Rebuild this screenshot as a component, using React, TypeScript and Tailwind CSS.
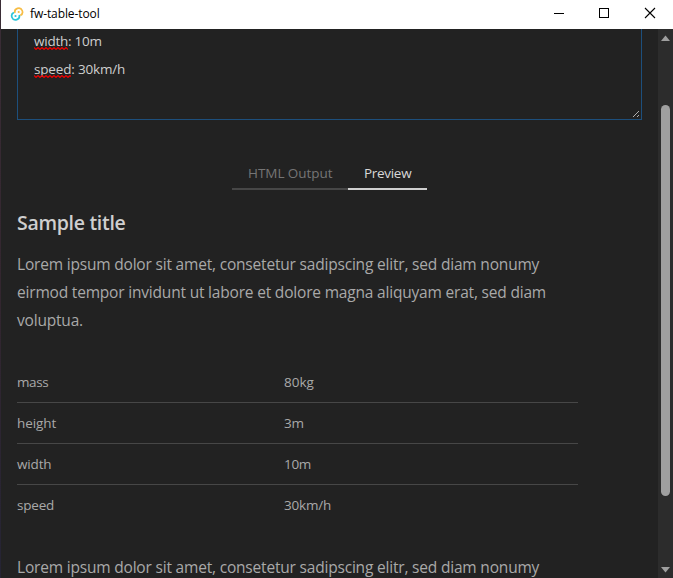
const rows = [
  { name: "mass", value: "80kg", a: "tracking-[-0.4px]", b: "tracking-[0px]" },
  { name: "height", value: "3m", a: "tracking-[-0.1px]", b: "tracking-[-0.3px]" },
  { name: "width", value: "10m", a: "tracking-[-0.15px]", b: "tracking-[-0.3px]" },
  { name: "speed", value: "30km/h", a: "tracking-[-0.2px]", b: "tracking-[-0.2px]" },
];

const intro = [
  "Lorem ipsum dolor sit amet, consetetur sadipscing elitr, sed diam nonumy",
  "eirmod tempor invidunt ut labore et dolore magna aliquyam erat, sed diam",
  "voluptua.",
];

function Misspelled({ word }: { word: string }) {
  return (
    <span className="relative inline-block">
      {word}
      <svg className="absolute top-[20px] left-0 h-[3px] w-full" fill="none">
        <path
          d="M0 .5L2 2.500L4 .5L6 2.500L8 .5L10 2.500L12 .5L14 2.500L16 .5L18 2.500L20 .5L22 2.500L24 .5L26 2.500L28 .5L30 2.500L32 .5L34 2.500L36 .5L38 2.500L40 .5"
          stroke="#f00000"
          strokeWidth="1.1"
        />
      </svg>
    </span>
  );
}

function TitleBar() {
  return (
    <header className="flex h-[29px] shrink-0 items-center bg-white pl-[9px] text-black">
      <svg width="14" height="14" viewBox="0 0 14 14" fill="none" className="mb-[2px] shrink-0">
        <path d="M5 6A3.800 3.800 0 1 1 10.300 8.400" stroke="#f7bd45" strokeWidth="1.7" />
        <path d="M9.200 8A3.800 3.800 0 1 1 3.900 5.600" stroke="#2cc5d8" strokeWidth="1.7" />
        <circle cx="8.700" cy="5" r="1.1" fill="#f7bd45" />
        <circle cx="5.500" cy="9" r="1.1" fill="#2cc5d8" />
      </svg>
      <span className="mb-[1px] ml-[6px] flex-1 text-[12px] leading-4 tracking-[-0.1px]">fw-table-tool</span>
      <svg width="120" height="29" viewBox="0 0 120 29" fill="none" stroke="#000" className="shrink-0" shapeRendering="crispEdges">
        <path d="M1 13.5H11M46.5 8.5h9v9h-9z" />
        <path d="M92 8l10 10M102 8L92 18" shapeRendering="auto" strokeWidth="1.1" />
      </svg>
    </header>
  );
}

function Scrollbar() {
  return (
    <div className="flex w-[15px] shrink-0 flex-col items-center bg-[#2c2c2c]">
      <svg width="15" height="76" viewBox="0 0 15 76" className="shrink-0">
        <path d="M3 12h9L7.500 6.500z" fill="#9f9f9f" />
      </svg>
      <div className="h-[391px] w-[9px] shrink-0 rounded-full bg-[#9f9f9f]" />
      <svg width="15" height="82" viewBox="0 0 15 82" className="shrink-0">
        <path d="M3 71h9l-4.500 5.500z" fill="#9f9f9f" />
      </svg>
    </div>
  );
}

function Paragraph({ lines }: { lines: string[] }) {
  return (
    <p className="text-[15.5px] leading-[28px] tracking-[-0.19px] whitespace-nowrap text-[#a9a9a9]">
      {lines.map((line) => (
        <span key={line} className="block">{line}</span>
      ))}
    </p>
  );
}

export default function App() {
  return (
    <div className="flex h-[578px] w-[673px] overflow-hidden bg-linear-to-b from-[#3a2d36] via-[#33262f] to-[#252434] font-['Open_Sans','Noto_Sans',sans-serif]">
      <div className="ml-px flex min-w-0 flex-1 flex-col bg-[#222222]">
        <TitleBar />
        <div className="flex min-h-0 flex-1">
          <main className="min-w-0 flex-1 overflow-hidden pl-4">
            <div className="relative flex h-[91px] w-[625px] flex-col border border-t-0 border-[#1d4f7c] pl-4 text-[13.5px] leading-[28px] text-[#cfcfcf]">
              <div className="-mt-[2px] h-[28px] tracking-[-0.24px]"><Misspelled word="width" />: 10m</div>
              <div className="h-[28px] tracking-[-0.18px]"><Misspelled word="speed" />: 30km/h</div>
              <svg width="8" height="8" viewBox="0 0 8 8" className="absolute right-px bottom-px" stroke="#c0c0c0" strokeWidth="0.9">
                <path d="M1 7L7 1M5 7l2-2" />
              </svg>
            </div>
            <div className="mt-[38px] ml-[215px] flex h-[32px] text-[13.5px] leading-[30px] whitespace-nowrap">
              <div className="w-[116px] border-b-2 border-[#474747] pl-4 tracking-[-0.05px] text-[#757575]">HTML Output</div>
              <div className="w-[79px] border-b-2 border-[#cfcfcf] pl-4 tracking-[-0.3px] text-[#d8d8d8]">Preview</div>
            </div>
            <h2 className="mt-[19px] text-[19.5px] leading-[28px] font-semibold tracking-[-0.3px] text-[#cfcfcf]">Sample title</h2>
            <div className="mt-[13px]"><Paragraph lines={intro} /></div>
            <div className="mt-[28px] w-[561px] text-[13.5px] text-[#a9a9a9]">
              {rows.map((row) => (
                <div key={row.name} className="grid h-[41px] grid-cols-[267px_1fr] border-b border-[#474747] leading-[40px] last:border-b-0">
                  <span className={row.a}>{row.name}</span>
                  <span className={row.b}>{row.value}</span>
                </div>
              ))}
            </div>
            <div className="mt-[27px]"><Paragraph lines={intro.slice(0, 1)} /></div>
          </main>
          <Scrollbar />
        </div>
      </div>
    </div>
  );
}
